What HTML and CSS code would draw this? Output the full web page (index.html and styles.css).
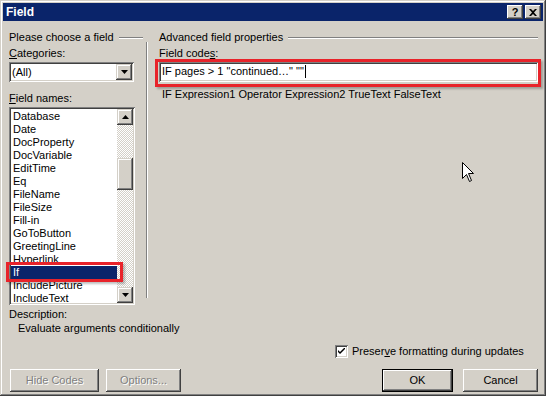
FILE: index.html
```html
<!DOCTYPE html>
<html lang="en">
<head>
    <meta charset="UTF-8">
    <title>Field</title>
    <link rel="stylesheet" href="styles.css">
</head>
<body>
    <div class="window">
        <div class="titlebar">
            <span class="title">Field</span>
            <div class="title-btns">
                <span class="tbtn">?</span>
                <span class="tbtn close">
                    <svg width="8" height="7" viewBox="0 0 8 7"><path d="M0 0h2l2 2 2-2h2L5 3.5 8 7H6L4 5 2 7H0l3-3.5z" fill="#000"/></svg>
                </span>
            </div>
        </div>

        <div class="content">
            <div class="panes">
                <section class="pane left">
                    <div class="group-head">Please choose a field</div>
                    <div class="lbl"><u>C</u>ategories:</div>
                    <div class="combo">
                        <span class="combo-text">(All)</span>
                        <span class="arrow-btn">
                            <svg width="7" height="4" viewBox="0 0 7 4"><path d="M0 0h7L3.5 4z" fill="#000"/></svg>
                        </span>
                    </div>
                    <div class="lbl names-lbl"><u>F</u>ield names:</div>
                    <div class="list-wrap">
                        <div class="listbox">
                            <ul class="items">
                                <li>Database</li>
                                <li>Date</li>
                                <li>DocProperty</li>
                                <li>DocVariable</li>
                                <li>EditTime</li>
                                <li>Eq</li>
                                <li>FileName</li>
                                <li>FileSize</li>
                                <li>Fill-in</li>
                                <li>GoToButton</li>
                                <li>GreetingLine</li>
                                <li>Hyperlink</li>
                                <li class="selected">If</li>
                                <li>IncludePicture</li>
                                <li>IncludeText</li>
                            </ul>
                            <div class="scrollbar">
                                <span class="sb-btn">
                                    <svg width="7" height="4" viewBox="0 0 7 4"><path d="M0 4h7L3.5 0z" fill="#000"/></svg>
                                </span>
                                <div class="sb-track">
                                    <span class="sb-thumb"></span>
                                </div>
                                <span class="sb-btn">
                                    <svg width="7" height="4" viewBox="0 0 7 4"><path d="M0 0h7L3.5 4z" fill="#000"/></svg>
                                </span>
                            </div>
                        </div>
                        <div class="mark mark-if"></div>
                    </div>
                </section>

                <div class="vsep"></div>

                <section class="pane right">
                    <div class="group-head">Advanced field properties</div>
                    <div class="lbl">Field code<u>s</u>:</div>
                    <div class="field-wrap">
                        <div class="textbox">IF pages &gt; 1 "continued…" ""<span class="caret"></span></div>
                        <div class="mark mark-codes"></div>
                    </div>
                    <div class="syntax">IF Expression1 Operator Expression2 TrueText FalseText</div>
                </section>
            </div>

            <div class="desc">
                <div class="desc-lbl">Description:</div>
                <div class="desc-text">Evaluate arguments conditionally</div>
            </div>

            <div class="check-row">
                <span class="checkbox">
                    <svg width="7" height="7" viewBox="0 0 7 7"><path d="M0 2l2 2 5-5v2L2 6 0 4z" fill="#000"/></svg>
                </span>
                <span class="check-lbl">Preser<u>v</u>e formatting during updates</span>
            </div>

            <div class="btn-row">
                <span class="btn disabled wide">Hide Codes</span>
                <span class="btn disabled">Options...</span>
                <span class="spacer"></span>
                <span class="btn default">OK</span>
                <span class="btn">Cancel</span>
            </div>
        </div>

        <svg class="cursor" width="13" height="21" viewBox="0 0 13 21">
            <path d="M0.5 0.5V16.5L4.5 12.5L7.5 19.5L9.5 18.5L6.5 11.5H11.5Z" fill="#fff" stroke="#000" stroke-linejoin="miter"/>
        </svg>
    </div>
</body>
</html>
```

FILE: styles.css
```css
* {
    margin: 0;
    padding: 0;
    box-sizing: border-box;
}

body {
    background: #d4d0c8;
    font-family: 'Liberation Sans', Arial, sans-serif;
    font-size: 11px;
    line-height: 13px;
    color: #000;
}

.window {
    position: relative;
    width: 546px;
    height: 396px;
    padding: 3px;
    background: #d4d0c8;
    box-shadow: inset -1px -1px #404040, inset 1px 1px #d4d0c8,
                inset -2px -2px #808080, inset 2px 2px #fff;
}

/* title bar */
.titlebar {
    height: 18px;
    background: #0a246a;
    display: flex;
    align-items: center;
    justify-content: space-between;
    padding: 0 2px 0 2px;
}

.title {
    color: #fff;
    font-weight: bold;
    font-size: 12px;
    padding-left: 1px;
}

.title-btns {
    display: flex;
    gap: 2px;
}

.tbtn {
    width: 16px;
    height: 14px;
    display: flex;
    align-items: center;
    justify-content: center;
    background: #d4d0c8;
    font-weight: bold;
    font-size: 11px;
    box-shadow: inset -1px -1px #404040, inset 1px 1px #fff,
                inset -2px -2px #808080, inset 2px 2px #d4d0c8;
}

/* main area */
.content {
    padding: 10px 5px 0 6px;
}

.panes {
    display: flex;
}

.pane.left {
    width: 134px;
}

.pane.right {
    flex: 1;
    margin-left: 11px;
}

.vsep {
    width: 2px;
    height: 256px;
    margin: 11px 0 0 3px;
    border-left: 1px solid #808080;
    border-right: 1px solid #fff;
}

.group-head {
    display: flex;
    align-items: center;
    white-space: nowrap;
}

.group-head::after {
    content: "";
    flex: 1;
    margin-left: 5px;
    border-top: 1px solid #808080;
    border-bottom: 1px solid #fff;
}

.lbl {
    margin-top: 3px;
}

.names-lbl {
    margin-top: 10px;
}

/* combo */
.combo {
    width: 125px;
    height: 20px;
    margin-top: 2px;
    display: flex;
    align-items: center;
    justify-content: space-between;
    padding: 2px;
    background: #fff;
    box-shadow: inset 1px 1px #808080, inset -1px -1px #fff,
                inset 2px 2px #404040, inset -2px -2px #d4d0c8;
}

.combo-text {
    padding-left: 1px;
}

.arrow-btn,
.sb-btn {
    width: 16px;
    height: 16px;
    display: flex;
    align-items: center;
    justify-content: center;
    background: #d4d0c8;
    box-shadow: inset -1px -1px #404040, inset 1px 1px #d4d0c8,
                inset -2px -2px #808080, inset 2px 2px #fff;
}

/* list */
.list-wrap {
    position: relative;
    margin-top: 2px;
}

.listbox {
    width: 126px;
    height: 198px;
    display: flex;
    padding: 2px;
    background: #fff;
    box-shadow: inset 1px 1px #808080, inset -1px -1px #fff,
                inset 2px 2px #404040, inset -2px -2px #d4d0c8;
}

.items {
    list-style: none;
    flex: 1;
    overflow: hidden;
    padding-top: 1px;
}

.items li {
    height: 13px;
    padding-left: 2px;
    white-space: nowrap;
}

.items li.selected {
    background: #0a246a;
    color: #fff;
}

.scrollbar {
    width: 16px;
    display: flex;
    flex-direction: column;
}

.sb-track {
    flex: 1;
    background: repeating-conic-gradient(#d4d0c8 0% 25%, #fff 0% 50%) 0 0 / 2px 2px;
    padding-top: 33px;
}

.sb-thumb {
    display: block;
    height: 32px;
    background: #d4d0c8;
    box-shadow: inset -1px -1px #404040, inset 1px 1px #d4d0c8,
                inset -2px -2px #808080, inset 2px 2px #fff;
}

/* red call-outs */
.mark {
    position: absolute;
    border: 3px solid #e8232a;
    box-shadow: 2px 2px 2px rgba(0, 0, 0, 0.25);
}

.mark-if {
    left: -3px;
    top: 155px;
    width: 117px;
    height: 20px;
}

.mark-codes {
    left: -4px;
    top: -3px;
    right: -3px;
    bottom: -5px;
}

/* field codes */
.field-wrap {
    position: relative;
    margin-top: 2px;
}

.textbox {
    height: 20px;
    padding: 3px 3px 0;
    background: #fff;
    white-space: nowrap;
    box-shadow: inset 1px 1px #808080, inset -1px -1px #fff,
                inset 2px 2px #404040, inset -2px -2px #d4d0c8;
}

.caret {
    display: inline-block;
    width: 1px;
    height: 13px;
    margin-left: 1px;
    vertical-align: top;
    background: #000;
}

.syntax {
    margin-top: 6px;
    padding-left: 3px;
}

/* description */
.desc {
    margin-top: 3px;
}

.desc-text {
    margin-top: 1px;
    padding-left: 9px;
}

/* checkbox */
.check-row {
    display: flex;
    align-items: center;
    margin-top: 10px;
    padding-left: 326px;
}

.checkbox {
    width: 13px;
    height: 13px;
    display: flex;
    align-items: center;
    justify-content: center;
    background: #fff;
    box-shadow: inset 1px 1px #808080, inset -1px -1px #fff,
                inset 2px 2px #404040, inset -2px -2px #d4d0c8;
}

.check-lbl {
    margin-left: 4px;
}

/* buttons */
.btn-row {
    display: flex;
    margin-top: 11px;
    padding-left: 1px;
}

.btn {
    width: 75px;
    height: 23px;
    display: flex;
    align-items: center;
    justify-content: center;
    margin-right: 8px;
    background: #d4d0c8;
    box-shadow: inset -1px -1px #404040, inset 1px 1px #fff,
                inset -2px -2px #808080, inset 2px 2px #d4d0c8;
}

.btn.wide {
    width: 89px;
    margin-right: 7px;
}

.btn.disabled {
    color: #808080;
    text-shadow: 1px 1px #fff;
}

.btn.default {
    width: 71px;
    margin-right: 10px;
    box-shadow: inset 0 0 0 1px #000, inset -2px -2px #404040,
                inset 2px 2px #fff, inset -3px -3px #808080;
}

.btn:last-child {
    margin-right: 0;
}

.spacer {
    flex: 1;
}

.cursor {
    position: absolute;
    left: 462px;
    top: 162px;
}
```
